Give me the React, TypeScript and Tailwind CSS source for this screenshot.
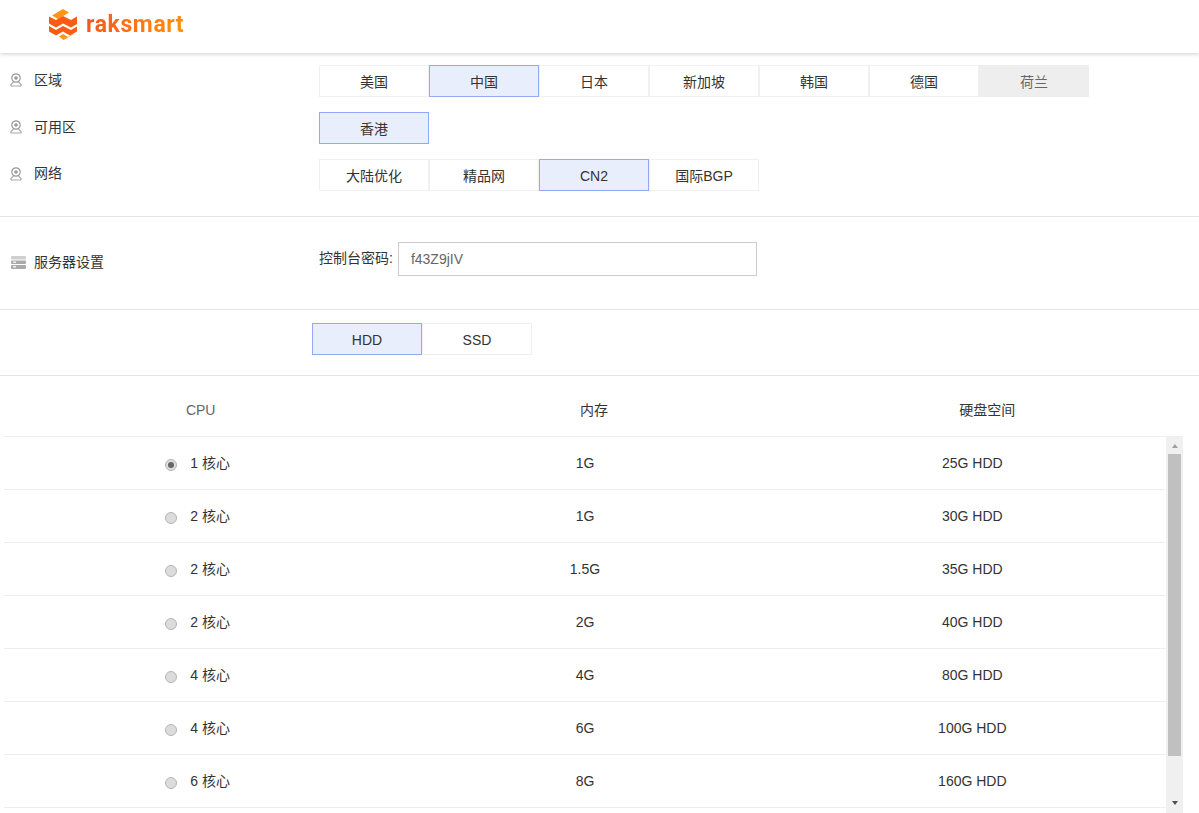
const font = { fontFamily: '"Liberation Sans", "Noto Sans CJK SC", sans-serif' }

const regions = ['美国', '中国', '日本', '新加坡', '韩国', '德国', '荷兰']
const networks = ['大陆优化', '精品网', 'CN2', '国际BGP']
const plans = [
  ['2 核心', '1G', '30G HDD'],
  ['2 核心', '1.5G', '35G HDD'],
  ['2 核心', '2G', '40G HDD'],
  ['4 核心', '4G', '80G HDD'],
  ['4 核心', '6G', '100G HDD'],
  ['6 核心', '8G', '160G HDD'],
]

function Logo() {
  return (
    <svg width="29" height="32" viewBox="0 0 29 32" className="shrink-0">
      <polygon points="3,7.500 14,1 20,4.500 9,11" fill="#ff9416" />
      <polygon points="0,8.500 0,15.500 7,19.500 14,15.500 22,19.500 28,16 28,8.500 22,12 14,8 7,12" fill="#fb5a12" />
      <polygon points="0,18 0,23.500 7,27.500 14,23.500 21,27.500 28,23.500 28,18.500 22,22 14,18 7,22" fill="#fb5a12" />
      <polygon points="10,28.500 14,26 19,29 25,25.500 25,26 14.500,32" fill="#ff9416" />
    </svg>
  )
}

function PinIcon() {
  return (
    <svg width="12" height="14" viewBox="0 0 12 14" fill="none" className="shrink-0">
      <circle cx="6" cy="5" r="4.200" stroke="#999" strokeWidth="1.200" />
      <circle cx="6" cy="5" r="1.800" fill="#999" />
      <path d="M3.500 9 L1 11.500 Q0.500 13 2 13 H10 Q11.500 13 11 11.500 L8.500 9" stroke="#aaa" strokeWidth="1.200" />
    </svg>
  )
}

function ServerIcon() {
  return (
    <svg width="15" height="13" viewBox="0 0 15 13" className="shrink-0">
      <rect x="0" y="0" width="15" height="3.500" rx="1" fill="#cfcfcf" />
      <rect x="0" y="4.500" width="15" height="3.500" rx="1" fill="#aaa" />
      <rect x="0" y="9" width="15" height="4" rx="1" fill="#aaa" />
      <rect x="2" y="5.500" width="3" height="1.500" fill="#eee" />
      <rect x="2" y="10" width="3" height="1.500" fill="#eee" />
    </svg>
  )
}

function Option({ label, active, disabled }: { label: string; active?: boolean; disabled?: boolean }) {
  let tone = 'border-[#f0f0f0] bg-white text-[#333]'
  if (active) tone = 'border-[#94a9f5] bg-[#e8eefc] text-[#333]'
  if (disabled) tone = 'border-[#eeeeee] bg-[#eeeeee] text-[#666]'
  return (
    <div className={`flex h-8 w-[110px] items-center justify-center border pt-px text-sm ${tone}`}>
      {label}
    </div>
  )
}

function Radio({ checked }: { checked?: boolean }) {
  return (
    <span className="mt-[5px] flex size-3 shrink-0 items-center justify-center rounded-full border border-[#b5b5b5] bg-[#dcdcdc]">
      {checked && <span className="size-1.5 rounded-full bg-[#666]" />}
    </span>
  )
}

function PlanRow({ cpu, ram, disk, checked }: { cpu: string; ram: string; disk: string; checked?: boolean }) {
  return (
    <div className="grid h-[53px] grid-cols-3 items-center border-b border-[#eeeeee] pb-px text-sm text-[#333]">
      <div className="flex items-center justify-center gap-[13px]">
        <Radio checked={checked} />
        <span>{cpu}</span>
      </div>
      <div className="text-center">{ram}</div>
      <div className="text-center">{disk}</div>
    </div>
  )
}

function ScrollBar() {
  return (
    <div className="flex h-full w-[17px] shrink-0 flex-col items-center bg-[#f0f0f0]">
      <div className="flex h-[17px] items-center justify-center">
        <div className="border-x-[3.5px] border-b-4 border-x-transparent border-b-[#a0a0a0]" />
      </div>
      <div className="h-[302px] w-[13px] bg-[#c0c0c0]" />
      <div className="flex-1" />
      <div className="mb-2 border-x-[3.5px] border-t-4 border-x-transparent border-t-[#505050]" />
    </div>
  )
}

export default function App() {
  return (
    <div className="h-[813px] overflow-hidden bg-white" style={font}>
      <header className="flex h-[53px] items-center gap-2 bg-white pb-[5px] pl-[49px] shadow-[0_1px_4px_rgba(0,0,0,0.2)]">
        <Logo />
        <span
          className="bg-linear-to-r from-[#f9541a] to-[#ff8f0a] bg-clip-text text-[23px] leading-none font-bold tracking-[0.6px] text-transparent"
          style={{ fontFamily: 'Roboto, sans-serif' }}
        >
          raksmart
        </span>
      </header>

      <section className="flex h-[164px] flex-col gap-[15px] border-b border-[#e5e5e5] pt-3">
        <div className="flex">
          <div className="flex w-[319px] items-start gap-3 pl-[10px] text-sm leading-[30px] text-[#333]">
            <span className="mt-2"><PinIcon /></span>
            区域
          </div>
          {regions.map((r) => (
            <Option key={r} label={r} active={r === '中国'} disabled={r === '荷兰'} />
          ))}
        </div>
        <div className="flex">
          <div className="flex w-[319px] items-start gap-3 pl-[10px] text-sm leading-[30px] text-[#333]">
            <span className="mt-2"><PinIcon /></span>
            可用区
          </div>
          <Option label="香港" active />
        </div>
        <div className="flex">
          <div className="flex w-[319px] items-start gap-3 pl-[10px] text-sm leading-[29px] text-[#333]">
            <span className="mt-2"><PinIcon /></span>
            网络
          </div>
          {networks.map((n) => (
            <Option key={n} label={n} active={n === 'CN2'} />
          ))}
        </div>
      </section>

      <section className="flex h-[93px] items-start border-b border-[#e5e5e5] pt-[25px]">
        <div className="flex w-[319px] items-center gap-2 pl-[11px] text-sm leading-10 text-[#333]">
          <ServerIcon />
          服务器设置
        </div>
        <label className="flex items-center gap-[5px] text-sm text-[#333]">
          <span className="mb-0.5">控制台密码:</span>
          <input
            readOnly
            value="f43Z9jIV"
            className="h-[34px] w-[359px] border border-[#ccc] px-3 text-sm text-[#666] outline-none"
          />
        </label>
      </section>

      <section className="flex h-[66px] border-b border-[#e5e5e5] pt-[13px] pl-[312px]">
        <Option label="HDD" active />
        <Option label="SSD" />
      </section>

      <div className="ml-1 grid h-[60px] w-[1180px] grid-cols-3 items-center pt-2 text-sm text-[#333]">
        <div className="text-center text-[#666]">CPU</div>
        <div className="text-center">内存</div>
        <div className="text-center">硬盘空间</div>
      </div>

      <div className="ml-1 flex h-[377px] w-[1179px] border-t border-[#eeeeee]">
        <div className="w-[1162px] shrink-0">
          <PlanRow cpu="1 核心" ram="1G" disk="25G HDD" checked />
          {plans.map((p, i) => (
            <PlanRow key={i} cpu={p[0]} ram={p[1]} disk={p[2]} />
          ))}
        </div>
        <ScrollBar />
      </div>
    </div>
  )
}
